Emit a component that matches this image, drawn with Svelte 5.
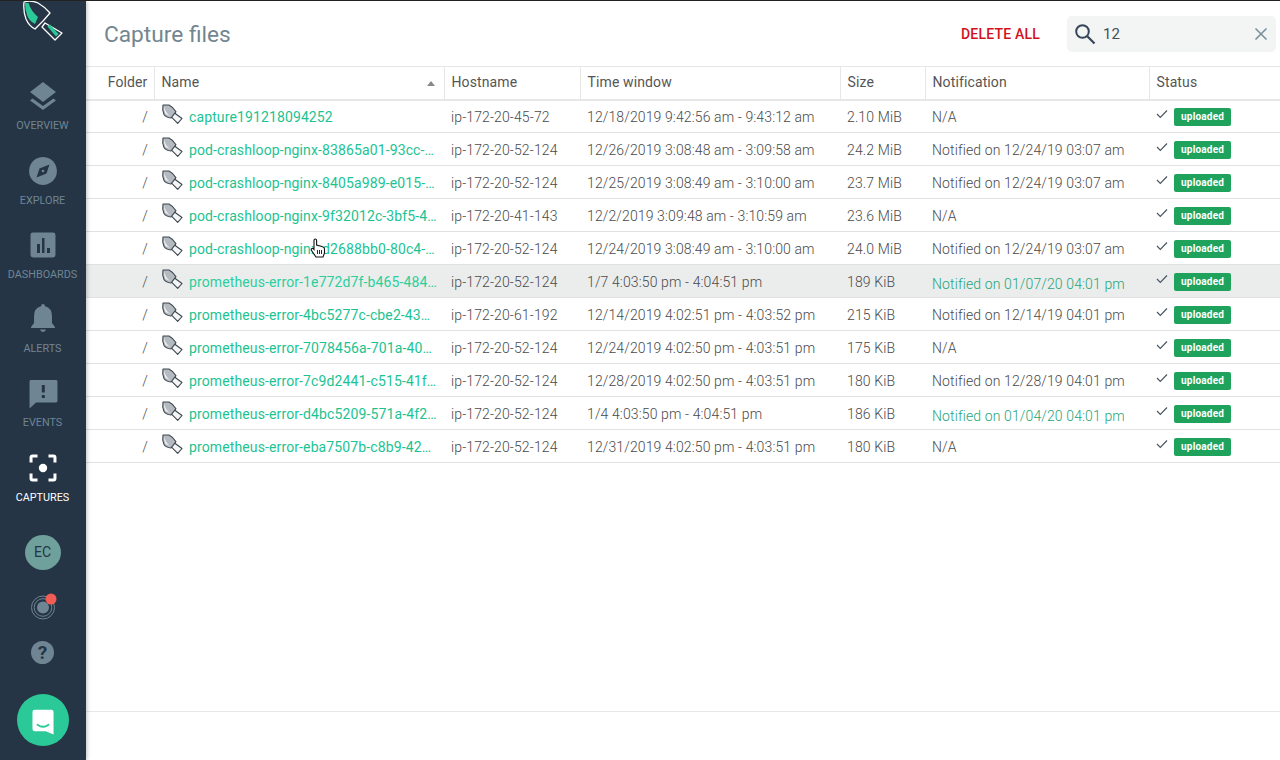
<script>
const rows = [
  ["capture191218094252", "ip-172-20-45-72", "12/18/2019 9:42:56 am - 9:43:12 am", "2.10 MiB", "N/A"],
  ["pod-crashloop-nginx-83865a01-93cc-4a6e-b1f0", "ip-172-20-52-124", "12/26/2019 3:08:48 am - 3:09:58 am", "24.2 MiB", "Notified on 12/24/19 03:07 am"],
  ["pod-crashloop-nginx-8405a989-e015-4c2b-a7d1", "ip-172-20-52-124", "12/25/2019 3:08:49 am - 3:10:00 am", "23.7 MiB", "Notified on 12/24/19 03:07 am"],
  ["pod-crashloop-nginx-9f32012c-3bf5-4e19-8c02", "ip-172-20-41-143", "12/2/2019 3:09:48 am - 3:10:59 am", "23.6 MiB", "N/A"],
  ["pod-crashloop-nginx-d2688bb0-80c4-4f7a-92de", "ip-172-20-52-124", "12/24/2019 3:08:49 am - 3:10:00 am", "24.0 MiB", "Notified on 12/24/19 03:07 am"],
  ["prometheus-error-1e772d7f-b465-4841-a3c7", "ip-172-20-52-124", "1/7 4:03:50 pm - 4:04:51 pm", "189 KiB", "Notified on 01/07/20 04:01 pm", "hover"],
  ["prometheus-error-4bc5277c-cbe2-43c8-91fa", "ip-172-20-61-192", "12/14/2019 4:02:51 pm - 4:03:52 pm", "215 KiB", "Notified on 12/14/19 04:01 pm"],
  ["prometheus-error-7078456a-701a-40d3-8be2", "ip-172-20-52-124", "12/24/2019 4:02:50 pm - 4:03:51 pm", "175 KiB", "N/A"],
  ["prometheus-error-7c9d2441-c515-41f6-a09b", "ip-172-20-52-124", "12/28/2019 4:02:50 pm - 4:03:51 pm", "180 KiB", "Notified on 12/28/19 04:01 pm"],
  ["prometheus-error-d4bc5209-571a-4f29-b6e3", "ip-172-20-52-124", "1/4 4:03:50 pm - 4:04:51 pm", "186 KiB", "Notified on 01/04/20 04:01 pm", "recent"],
  ["prometheus-error-eba7507b-c8b9-42b1-9d74", "ip-172-20-52-124", "12/31/2019 4:02:50 pm - 4:03:51 pm", "180 KiB", "N/A"]
];

const nav = [
  { label: "OVERVIEW", icon: "layers" },
  { label: "EXPLORE", icon: "compass" },
  { label: "DASHBOARDS", icon: "chart" },
  { label: "ALERTS", icon: "bell" },
  { label: "EVENTS", icon: "event" },
  { label: "CAPTURES", icon: "capture", active: true }
];
</script>

<div class="app">
  <aside class="side">
    <div class="logo">
      <svg width="42" height="42" viewBox="21 1 42 42">
        <path d="M45 23 L62 33 L55 40 L42 27 Z" fill="#253545" stroke="#fff" stroke-width="1.300" stroke-linejoin="round"/>
        <path d="M47.500 26.500 L50 24.500 L58.500 34 L56 36.500 Z" fill="#2bc997"/>
        <path d="M24 2 Q31 0 38 3 Q45 7 50 13 L43 21 L35 29 Q29 26 26 19 Q23 11 24 2 Z" fill="#253545" stroke="#fff" stroke-width="1.300" stroke-linejoin="round"/>
        <path d="M25 3 L28.500 3 Q31 11 38 17 L35 24 Q29 21 27 15 Q25 9 25 3 Z" fill="#2bc997"/>
      </svg>
    </div>
    <nav class="nav">
      {#each nav as item}
        <div class="nav-item" class:active={item.active}>
          <svg class="nav-icon" width="34" height="34" viewBox="0 0 34 34">
            {#if item.icon === "layers"}
              <path d="M17 3 L30 13 L17 23 L4 13 Z"/>
              <path d="M6.500 19.500 L4 21.500 L17 31 L30 21.500 L27.500 19.500 L17 27 Z"/>
            {:else if item.icon === "compass"}
              <path fill-rule="evenodd" d="M17 3 A14 14 0 1 1 16.990 3 Z M23.500 10.500 L13.500 14.500 L10.500 23.500 L20.500 19.500 Z"/>
              <circle cx="17" cy="17" r="1.300"/>
            {:else if item.icon === "chart"}
              <path fill-rule="evenodd" d="M7 4.500 H27 Q29.500 4.500 29.500 7 V27 Q29.500 29.500 27 29.500 H7 Q4.500 29.500 4.500 27 V7 Q4.500 4.500 7 4.500 Z M11 16 V25 H14 V16 Z M16 10 V25 H18.500 V10 Z M21 20 V25 H24 V20 Z"/>
            {:else if item.icon === "bell"}
              <path d="M17 2 Q19 2 19 4.200 Q26 6 26 14 V21 L29 25 V26 H5 V25 L8 21 V14 Q8 6 15 4.200 Q15 2 17 2 Z M14 27.500 H20 Q19.500 30 17 30 Q14.500 30 14 27.500 Z"/>
            {:else if item.icon === "event"}
              <path fill-rule="evenodd" d="M5 3 H30 Q31.500 3 31.500 4.500 V24 Q31.500 25.500 30 25.500 H10 L3.500 31.500 V4.500 Q3.500 3 5 3 Z M15.800 8 V15.500 H18.800 V8 Z M15.800 18 V21 H18.800 V18 Z"/>
            {:else}
              <path class="frame" d="M5 11.500 V6.500 Q5 5 6.500 5 H11.500 M22.500 5 H27.500 Q29 5 29 6.500 V11.500 M29 22.500 V27.500 Q29 29 27.500 29 H22.500 M11.500 29 H6.500 Q5 29 5 27.500 V22.500"/>
              <circle cx="17" cy="17" r="4.200"/>
            {/if}
          </svg>
          <span>{item.label}</span>
        </div>
      {/each}
    </nav>
    <div class="avatar">EC</div>
    <div class="radar">
      <svg width="28" height="28" viewBox="0 0 28 28">
        <circle cx="13" cy="14.500" r="11.500" fill="none" stroke="#6f8594" stroke-width="1"/>
        <circle cx="13" cy="14.500" r="8.800" fill="none" stroke="#6f8594" stroke-width="1"/>
        <circle cx="13" cy="14.500" r="6" fill="#6f8594"/>
        <circle cx="21" cy="6" r="5.500" fill="#f25c54"/>
      </svg>
    </div>
    <div class="help">?</div>
    <div class="chat">
      <svg width="22" height="26" viewBox="0 0 24 28">
        <path d="M3 0.500 H21 Q23.500 0.500 23.500 3 V27.500 L15 24 H3 Q0.500 24 0.500 21 V3 Q0.500 0.500 3 0.500 Z" fill="#fff"/>
        <path d="M6 17 Q12 21.500 18 17" fill="none" stroke="#2bc997" stroke-width="2" stroke-linecap="round"/>
      </svg>
    </div>
  </aside>

  <main class="main">
    <header class="top">
      <h1>Capture files</h1>
      <button class="delete">DELETE ALL</button>
      <div class="search">
        <svg width="22" height="22" viewBox="0 0 22 22">
          <circle cx="7.500" cy="8.500" r="6.300" fill="none" stroke="#36465a" stroke-width="2"/>
          <path d="M12.300 13.300 L19.500 20.500" stroke="#36465a" stroke-width="2.200"/>
        </svg>
        <span class="term">12</span>
        <svg class="clear" width="14" height="14" viewBox="0 0 14 14">
          <path d="M1.500 1.500 L12.500 12.500 M12.500 1.500 L1.500 12.500" stroke="#78909c" stroke-width="1.600"/>
        </svg>
      </div>
    </header>

    <div class="content">
      <table>
        <colgroup>
          <col style="width: 68px" />
          <col style="width: 290px" />
          <col style="width: 136px" />
          <col style="width: 260px" />
          <col style="width: 85px" />
          <col style="width: 224px" />
          <col />
        </colgroup>
        <thead>
          <tr>
            <th class="folder">Folder</th>
            <th>Name<span class="sort"></span></th>
            <th>Hostname</th>
            <th>Time window</th>
            <th>Size</th>
            <th>Notification</th>
            <th>Status</th>
          </tr>
        </thead>
        <tbody>
          {#each rows as r}
            <tr class={r[5] === "hover" ? "hover" : ""}>
              <td class="folder"><span class="slash">/</span></td>
              <td>
                <div class="name">
                  <svg class="spade" width="22" height="21" viewBox="0 0 22 21">
                    <path d="M13.500 9 L21 14.500 L16.700 19.300 L10 12.700 Z" fill="#f4f5f5" stroke="#3c4650" stroke-width="1.100" stroke-linejoin="round"/>
                    <path d="M2 1 L8 1 Q12 3 15 7.700 L10 14 Q5 13.500 3 10.500 Q1 6 2 1 Z" fill="#b4babf" stroke="#3c4650" stroke-width="1.100" stroke-linejoin="round"/>
                    <path d="M3 2 Q4 8 9 12 L4.500 10 Q2.500 6 3 2 Z" fill="#eef0f1"/>
                  </svg>
                  <span class="link">{r[0]}</span>
                </div>
              </td>
              <td>{r[1]}</td>
              <td>{r[2]}</td>
              <td>{r[3]}</td>
              <td class:recent={r[5]}>{r[4]}</td>
              <td>
                <div class="status">
                  <svg class="tick" width="12" height="10" viewBox="0 0 12 10">
                    <path d="M1 5 L4.300 8.300 L11 1.500" fill="none" stroke="#4a5560" stroke-width="1.200"/>
                  </svg>
                  <span class="badge">uploaded</span>
                </div>
              </td>
            </tr>
          {/each}
        </tbody>
      </table>
    </div>
    <footer class="foot"></footer>
  </main>

  <svg class="cursor" width="16" height="20" viewBox="0 0 16 20">
    <path d="M4 9 V2.500 Q4 1 5.300 1 Q6.600 1 6.600 2.500 V7 L12 8.500 Q14.500 9.200 14.500 11 V15 L13 19 H6 L1.500 12.500 Q0.800 11 2 10.500 Q3 10.200 4 11.500 Z" fill="#fff" stroke="#111" stroke-width="1.100"/>
    <path d="M7.500 12 V16 M9.500 12 V16 M11.500 12 V16" stroke="#111" stroke-width="0.900"/>
  </svg>
</div>

<style>
:global(body) {
  margin: 0;
  background: #fff;
}

.app {
  display: flex;
  height: 760px;
  width: 1280px;
  overflow: hidden;
  position: relative;
  font-family: Roboto, "Liberation Sans", sans-serif;
  border-top: 1px solid #222;
  box-sizing: border-box;
}

.side {
  width: 86px;
  flex: none;
  background: #253545;
  display: flex;
  flex-direction: column;
  align-items: center;
  padding-right: 1px;
  box-sizing: border-box;
  box-shadow: 1px 0 4px rgba(0, 0, 0, 0.25);
  z-index: 2;
}

.logo {
  height: 58px;
  width: 100%;
  padding-left: 21px;
  box-sizing: border-box;
}

.logo svg {
  display: block;
  overflow: hidden;
}

.nav {
  width: 100%;
}

.nav-item {
  height: 74.3px;
  display: flex;
  flex-direction: column;
  align-items: center;
  color: #6f8594;
  font-size: 10.8px;
  line-height: 14px;
  padding-top: 20.4px;
  box-sizing: border-box;
}

.nav-item span {
  margin-top: 6px;
  white-space: nowrap;
}

.nav-icon {
  fill: #6f8594;
  display: block;
}

.active {
  color: #fff;
}

.active .nav-icon {
  fill: #fff;
}

.frame {
  fill: none;
  stroke: #fff;
  stroke-width: 3;
}

.avatar {
  width: 36px;
  height: 35px;
  border-radius: 50%;
  background: #6fa09c;
  color: #253545;
  font-size: 14px;
  display: flex;
  align-items: center;
  justify-content: center;
  margin-top: 30px;
}

.radar {
  margin-top: 23px;
  height: 28px;
  width: 28px;
  padding-left: 3px;
}

.help {
  width: 23px;
  height: 23px;
  border-radius: 50%;
  background: #6f8594;
  color: #253545;
  font-size: 19px;
  font-weight: 700;
  line-height: 23px;
  text-align: center;
  margin-top: 20px;
}

.chat {
  width: 52px;
  height: 52px;
  border-radius: 50%;
  background: #2bc997;
  display: flex;
  align-items: center;
  justify-content: center;
  margin-top: 30px;
}

.chat svg {
  margin-top: 4px;
}

.main {
  flex: 1;
  min-width: 0;
  display: flex;
  flex-direction: column;
}

.top {
  height: 65px;
  display: flex;
  align-items: center;
  padding: 0 4px 0 18px;
  flex: none;
}

h1 {
  margin: 2px 0 0;
  font-size: 22.7px;
  font-weight: 400;
  color: #73868f;
  flex: 1;
}

.delete {
  border: none;
  background: none;
  padding: 0;
  font-family: inherit;
  font-size: 14px;
  font-weight: 500;
  letter-spacing: 0.2px;
  color: #d3111c;
  margin-right: 27px;
}

.search {
  width: 209px;
  height: 36px;
  background: #f3f5f5;
  border-radius: 5px;
  display: flex;
  align-items: center;
  padding: 0 8px;
  box-sizing: border-box;
}

.term {
  font-size: 15px;
  color: #444f5a;
  margin-left: 6px;
  flex: 1;
}

.content {
  flex: 1;
}

table {
  width: 100%;
  table-layout: fixed;
  border-collapse: collapse;
  font-size: 14px;
  letter-spacing: 0.12px;
  color: #555;
}

th {
  height: 33px;
  padding: 0 7px 2px;
  font-weight: 400;
  text-align: left;
  color: #555;
  border-top: 1px solid #e6e8e8;
  border-bottom: 2px solid #e6e8e8;
  border-right: 1px solid #e6e8e8;
  position: relative;
  box-sizing: border-box;
}

th:last-child {
  border-right: none;
}

th.folder {
  text-align: right;
  padding-right: 6px;
}

td {
  height: 33px;
  padding: 1px 7px 0;
  border-bottom: 1px solid #e0e2e2;
  box-sizing: border-box;
  font-weight: 300;
  white-space: nowrap;
  overflow: hidden;
  color: #4a4a4a;
}

td.folder {
  text-align: right;
  padding-right: 6px;
}

.hover td {
  background: #ebeded;
}

.hover .link {
  color: #2ccf9c;
}

td.recent {
  color: #1fa578;
  padding-top: 6px;
}

.sort {
  position: absolute;
  right: 9px;
  top: 14px;
  border-left: 4px solid transparent;
  border-right: 4px solid transparent;
  border-bottom: 5px solid #888;
}

.name {
  display: flex;
  align-items: center;
  min-width: 0;
}

.spade {
  flex: none;
  margin-top: -5px;
  margin-right: 6px;
}

.link {
  color: #1cc392;
  overflow: hidden;
  text-overflow: ellipsis;
  white-space: nowrap;
  font-weight: 400;
  min-width: 0;
}

.status {
  display: flex;
  align-items: center;
  gap: 6px;
}

.tick {
  margin-top: -5px;
  flex: none;
}

.badge {
  background: #1fa35c;
  color: #fff;
  font-size: 10px;
  font-weight: 700;
  letter-spacing: 0.2px;
  line-height: 18px;
  height: 18px;
  padding: 0 7px;
  border-radius: 2px;
  margin-top: 1px;
}

.foot {
  height: 48px;
  flex: none;
  border-top: 1px solid #e6e8e8;
}

.cursor {
  position: absolute;
  left: 310px;
  top: 237px;
  z-index: 3;
}
</style>
